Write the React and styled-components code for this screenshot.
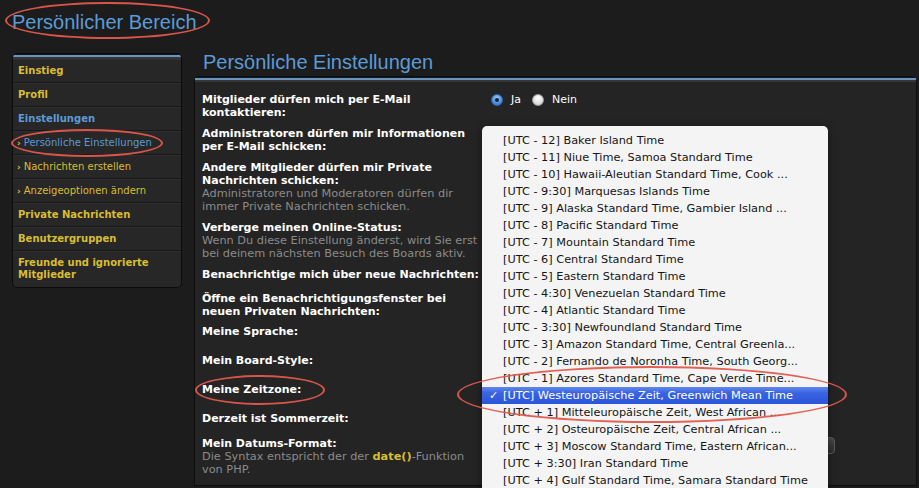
import React from "react";
import styled, { createGlobalStyle } from "styled-components";

const GlobalStyle = createGlobalStyle`
  html, body { margin: 0; padding: 0; background: #1c1c1c; }
  body {
    width: 919px; height: 488px; overflow: hidden;
    font-family: "DejaVu Sans", Verdana, sans-serif;
  }
`;

const Page = styled.div`
  position: relative;
  width: 919px;
  height: 488px;
  overflow: hidden;
  background: #1c1c1c;
`;

const PageTitle = styled.h1`
  margin: 0;
  height: 53px;
  box-sizing: border-box;
  padding: 8px 0 0 12px;
  font: 400 20px/28px "Liberation Sans", Arial, sans-serif;
  color: #5b9bd6;
`;

const Columns = styled.div`
  display: flex;
  align-items: flex-start;
  gap: 12px;
  padding: 0 2px 0 12px;
`;

const Stripe = styled.div`
  height: 5px;
  background: linear-gradient(#0a1826 0 1px, #6b93bb 1px 3px, #363636 3px 5px);
`;

const Sidebar = styled.nav`
  width: 170px;
  flex: none;
  box-sizing: border-box;
  background: #272727;
  border: 1px solid #0b0b0b;
  border-radius: 5px;
  overflow: hidden;
`;

const SideItem = styled.div`
  display: flex;
  align-items: center;
  gap: 3px;
  box-sizing: border-box;
  min-height: 24px;
  padding: ${(p) => (p.$tall ? "6px 5px" : "0 5px")};
  border-bottom: 1px solid #181818;
  box-shadow: inset 0 1px 0 #2f2f2f;
  font-size: 10px;
  font-weight: ${(p) => (p.$sub ? 400 : 700)};
  line-height: 12px;
  color: ${(p) => (p.$active ? "#5b9bd6" : "#d9bd33")};
  &:last-child { border-bottom: none; }
`;

const Bullet = styled.span`
  color: #d9bd33;
  font-weight: 700;
  font-size: 9px;
  margin-left: -1px;
`;

const Main = styled.div`
  flex: 1;
  display: flex;
  flex-direction: column;
`;

const MainTitle = styled.h2`
  margin: 0;
  height: 23px;
  padding-left: 9px;
  font: 400 20px/18px "Liberation Sans", Arial, sans-serif;
  color: #5b9bd6;
`;

const Panel = styled.section`
  position: relative;
  height: 410px;
  box-sizing: border-box;
  background: #242424;
  border: 1px solid #0d0d0d;
  border-radius: 5px 5px 0 0;
`;

const Form = styled.div`
  display: flex;
  flex-direction: column;
  padding: 11px 0 0 7px;
`;

const Row = styled.div`
  display: grid;
  grid-template-columns: 289px 1fr;
  height: ${(p) => p.$h}px;
`;

const Label = styled.div`
  font-size: 11px;
  font-weight: 700;
  line-height: 13px;
  color: #ffffff;
`;

const Hint = styled.span`
  display: block;
  font-size: 11.3px;
  font-weight: 400;
  color: #8b8b8b;
`;

const Code = styled.span`
  color: #d9bd33;
  font-weight: 700;
`;

const RadioGroup = styled.div`
  display: flex;
  align-items: center;
  height: 13px;
  font-size: 11px;
  color: #ffffff;
`;

const RadioLabel = styled.span`
  margin: 0 11px 0 8px;
`;

const Radio = styled.span`
  width: 12px;
  height: 12px;
  border-radius: 50%;
  box-sizing: border-box;
  display: inline-flex;
  align-items: center;
  justify-content: center;
  background: ${(p) =>
    p.$on
      ? "radial-gradient(circle at 50% 30%, #9cc6f5, #3f84dc 70%)"
      : "radial-gradient(circle at 50% 30%, #ffffff, #d7d7d7 75%)"};
  border: 1px solid ${(p) => (p.$on ? "#2f67b5" : "#9a9a9a")};
  &::after {
    content: "";
    width: 4px;
    height: 4px;
    border-radius: 50%;
    background: ${(p) => (p.$on ? "#10243f" : "transparent")};
  }
`;

const Select = styled.div`
  width: ${(p) => p.$w}px;
  height: 17px;
  box-sizing: border-box;
  border: 1px solid #5d5d5d;
  border-radius: 4px;
  background: linear-gradient(#4a4a4a, #2c2c2c);
`;

const Menu = styled.ul`
  position: absolute;
  left: 287px;
  top: 49px;
  width: 346px;
  height: 370px;
  margin: 0;
  padding: 6px 0 0;
  list-style: none;
  box-sizing: border-box;
  background: #f4f4f4;
  border-radius: 5px 5px 0 0;
  box-shadow: 0 2px 10px rgba(0, 0, 0, 0.45);
  font-size: 11.3px;
  color: #151515;
`;

const Option = styled.li`
  position: relative;
  height: 17px;
  line-height: 17px;
  padding-left: 21px;
  white-space: nowrap;
  color: ${(p) => (p.$selected ? "#ffffff" : "#151515")};
  background: ${(p) =>
    p.$selected
      ? "linear-gradient(#6088ee, #3a63e1 35%, #2b56da)"
      : "transparent"};
`;

const Check = styled.span`
  position: absolute;
  left: 7px;
  top: 0;
  font-size: 11px;
`;

const Ring = styled.span.attrs((p) => ({
  style: { left: p.$x, top: p.$y, width: p.$w, height: p.$h },
}))`
  position: absolute;
  box-sizing: border-box;
  border: 2.5px solid rgba(226, 88, 76, 0.95);
  border-radius: 50%;
  pointer-events: none;
`;

const zones = [
  "[UTC - 12] Baker Island Time",
  "[UTC - 11] Niue Time, Samoa Standard Time",
  "[UTC - 10] Hawaii-Aleutian Standard Time, Cook ...",
  "[UTC - 9:30] Marquesas Islands Time",
  "[UTC - 9] Alaska Standard Time, Gambier Island ...",
  "[UTC - 8] Pacific Standard Time",
  "[UTC - 7] Mountain Standard Time",
  "[UTC - 6] Central Standard Time",
  "[UTC - 5] Eastern Standard Time",
  "[UTC - 4:30] Venezuelan Standard Time",
  "[UTC - 4] Atlantic Standard Time",
  "[UTC - 3:30] Newfoundland Standard Time",
  "[UTC - 3] Amazon Standard Time, Central Greenla...",
  "[UTC - 2] Fernando de Noronha Time, South Georg...",
  "[UTC - 1] Azores Standard Time, Cape Verde Time...",
  "[UTC] Westeuropäische Zeit, Greenwich Mean Time",
  "[UTC + 1] Mitteleuropäische Zeit, West African ...",
  "[UTC + 2] Osteuropäische Zeit, Central African ...",
  "[UTC + 3] Moscow Standard Time, Eastern African...",
  "[UTC + 3:30] Iran Standard Time",
  "[UTC + 4] Gulf Standard Time, Samara Standard Time",
];

const YesNo = () => (
  <RadioGroup>
    <Radio $on />
    <RadioLabel>Ja</RadioLabel>
    <Radio />
    <RadioLabel>Nein</RadioLabel>
  </RadioGroup>
);

const Empty = styled.div``;

export default function App() {
  return (
    <Page>
      <GlobalStyle />
      <PageTitle>Persönlicher Bereich</PageTitle>
      <Columns>
        <Sidebar>
          <Stripe />
          <SideItem>Einstieg</SideItem>
          <SideItem>Profil</SideItem>
          <SideItem $active>Einstellungen</SideItem>
          <SideItem $sub $active>
            <Bullet>›</Bullet>Persönliche Einstellungen
          </SideItem>
          <SideItem $sub>
            <Bullet>›</Bullet>Nachrichten erstellen
          </SideItem>
          <SideItem $sub>
            <Bullet>›</Bullet>Anzeigeoptionen ändern
          </SideItem>
          <SideItem>Private Nachrichten</SideItem>
          <SideItem>Benutzergruppen</SideItem>
          <SideItem $tall>
            Freunde und ignorierte
            <br />
            Mitglieder
          </SideItem>
        </Sidebar>
        <Main>
          <MainTitle>Persönliche Einstellungen</MainTitle>
          <Panel>
            <Stripe />
            <Form>
              <Row $h={34}>
                <Label>
                  Mitglieder dürfen mich per E-Mail
                  <br />
                  kontaktieren:
                </Label>
                <YesNo />
              </Row>
              <Row $h={34}>
                <Label>
                  Administratoren dürfen mir Informationen
                  <br />
                  per E-Mail schicken:
                </Label>
                <Empty />
              </Row>
              <Row $h={60}>
                <Label>
                  Andere Mitglieder dürfen mir Private
                  <br />
                  Nachrichten schicken:
                  <Hint>
                    Administratoren und Moderatoren dürfen dir
                    <br />
                    immer Private Nachrichten schicken.
                  </Hint>
                </Label>
                <Empty />
              </Row>
              <Row $h={47}>
                <Label>
                  Verberge meinen Online-Status:
                  <Hint>
                    Wenn Du diese Einstellung änderst, wird Sie erst
                    <br />
                    bei deinem nächsten Besuch des Boards aktiv.
                  </Hint>
                </Label>
                <Empty />
              </Row>
              <Row $h={24}>
                <Label>Benachrichtige mich über neue Nachrichten:</Label>
                <Empty />
              </Row>
              <Row $h={33}>
                <Label>
                  Öffne ein Benachrichtigungsfenster bei
                  <br />
                  neuen Privaten Nachrichten:
                </Label>
                <Empty />
              </Row>
              <Row $h={29}>
                <Label>Meine Sprache:</Label>
                <Select $w={300} />
              </Row>
              <Row $h={29}>
                <Label>Mein Board-Style:</Label>
                <Select $w={300} />
              </Row>
              <Row $h={29}>
                <Label>Meine Zeitzone:</Label>
                <Select $w={330} />
              </Row>
              <Row $h={25}>
                <Label>Derzeit ist Sommerzeit:</Label>
                <Empty />
              </Row>
              <Row $h={50}>
                <Label>
                  Mein Datums-Format:
                  <Hint>
                    Die Syntax entspricht der der <Code>date()</Code>-Funktion
                    <br />
                    von PHP.
                  </Hint>
                </Label>
                <Select $w={344} />
              </Row>
            </Form>
            <Menu>
              {zones.map((z, i) => (
                <Option key={z} $selected={i === 15}>
                  {i === 15 && <Check>✓</Check>}
                  {z}
                </Option>
              ))}
            </Menu>
          </Panel>
        </Main>
      </Columns>
      <Ring $x={5} $y={2} $w={205} $h={37} />
      <Ring $x={11} $y={129} $w={152} $h={28} />
      <Ring $x={195} $y={375} $w={130} $h={30} />
      <Ring $x={457} $y={366} $w={390} $h={57} />
    </Page>
  );
}
